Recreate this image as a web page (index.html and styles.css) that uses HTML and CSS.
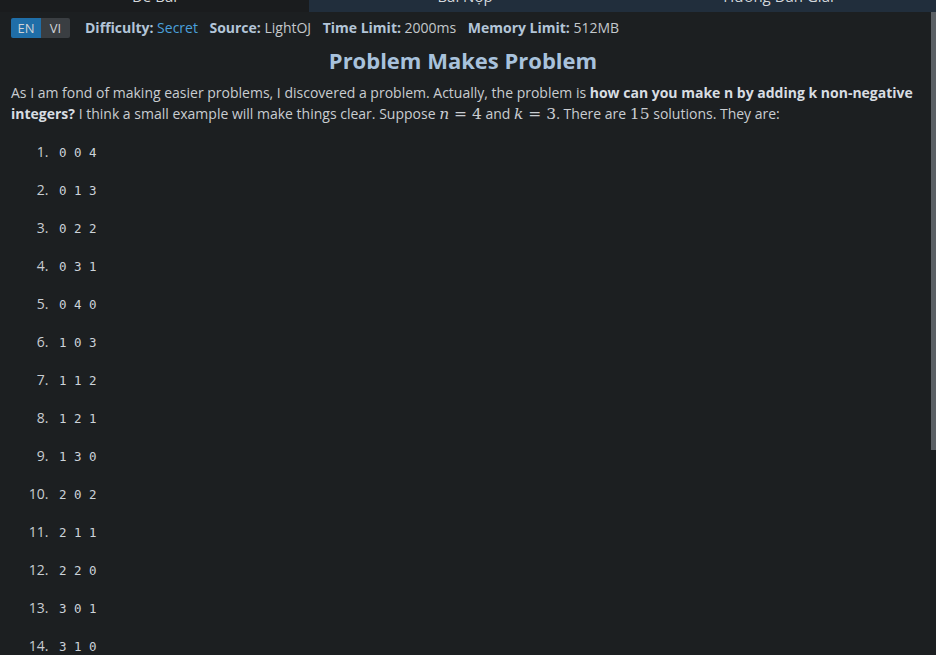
FILE: index.html
```html
<!DOCTYPE html>
<html lang="en">
<head>
<meta charset="utf-8">
<title>Problem Makes Problem</title>
<link rel="stylesheet" href="styles.css">
</head>
<body>
<nav class="tabs">
  <div class="tab tab-active"><span class="tab-label">Đề Bài</span></div>
  <div class="tab"><span class="tab-label">Bài Nộp</span></div>
  <div class="tab"><span class="tab-label">Hướng Dẫn Giải</span></div>
</nav>
<main class="content">
  <div class="meta">
    <div class="lang">
      <span class="lang-btn lang-on">EN</span><span class="lang-btn">VI</span>
    </div>
    <span class="meta-item"><b>Difficulty:</b> <span class="secret">Secret</span></span>
    <span class="meta-item"><b>Source:</b> LightOJ</span>
    <span class="meta-item"><b>Time Limit:</b> 2000ms</span>
    <span class="meta-item"><b>Memory Limit:</b> 512MB</span>
  </div>
  <h1 class="title">Problem Makes Problem</h1>
  <p class="statement">As I am fond of making easier problems, I discovered a problem. Actually, the problem is <b>how can you make n by adding k non-negative integers?</b> I think a small example will make things clear. Suppose <span class="math"><i>n</i> = 4</span> and <span class="math"><i>k</i> = 3</span>. There are <span class="math">15</span> solutions. They are:</p>
  <ol class="solutions">
    <li><code>0 0 4</code></li>
    <li><code>0 1 3</code></li>
    <li><code>0 2 2</code></li>
    <li><code>0 3 1</code></li>
    <li><code>0 4 0</code></li>
    <li><code>1 0 3</code></li>
    <li><code>1 1 2</code></li>
    <li><code>1 2 1</code></li>
    <li><code>1 3 0</code></li>
    <li><code>2 0 2</code></li>
    <li><code>2 1 1</code></li>
    <li><code>2 2 0</code></li>
    <li><code>3 0 1</code></li>
    <li><code>3 1 0</code></li>
    <li><code>4 0 0</code></li>
  </ol>
</main>
<div class="scrollbar"></div>
</body>
</html>
```

FILE: styles.css
```css
html, body {
  margin: 0;
  padding: 0;
  height: 100%;
  overflow: hidden;
  background: #1c1f21;
}
body {
  font-family: "Open Sans", "Noto Sans", sans-serif;
  color: #c9cdd1;
}
.tabs {
  display: grid;
  grid-template-columns: 309px 312px 1fr;
  height: 12px;
}
.tab {
  overflow: hidden;
  background: #212e3c;
  color: #d4d8dc;
  text-align: center;
  font-size: 15px;
}
.tab-active {
  background: #1a1c1e;
}
.tab-label {
  display: block;
  line-height: 20px;
  margin-top: -14px;
}
.content {
  padding: 6px 21px 0 11px;
}
.meta {
  display: flex;
  align-items: center;
  gap: 11.5px;
  font-size: 14px;
  line-height: 20px;
  color: #c4c8cc;
}
.meta b {
  color: #b3c5d8;
}
.secret {
  color: #4aa0dc;
}
.lang {
  display: flex;
  border-radius: 2px;
  overflow: hidden;
  margin-right: 3.5px;
  font-size: 13px;
}
.lang-btn {
  width: 29px;
  text-align: center;
  background: #3a3e42;
  color: #cfd3d7;
}
.lang-on {
  width: 30px;
  background: #1f6ea8;
}
.title {
  margin: 7px 0 7px;
  text-align: center;
  font-size: 22px;
  line-height: 30px;
  font-weight: 700;
  color: #a8c2dc;
}
.statement {
  margin: 0;
  font-size: 14px;
  line-height: 21px;
}
.statement b {
  color: #d8dde2;
}
.math {
  font-family: "DejaVu Serif", "Liberation Serif", serif;
  font-size: 15.5px;
}
.solutions {
  margin: 17px 0 0;
  padding-left: 41px;
  font-size: 14px;
}
.solutions li {
  height: 38px;
  line-height: 20px;
  padding-left: 7px;
}
.solutions code {
  font-family: "DejaVu Sans Mono", monospace;
  font-size: 12.5px;
  color: #ccd3da;
}
.scrollbar {
  position: absolute;
  top: 12px;
  right: 0;
  width: 5px;
  height: 438px;
  background: #5b6065;
}
```
